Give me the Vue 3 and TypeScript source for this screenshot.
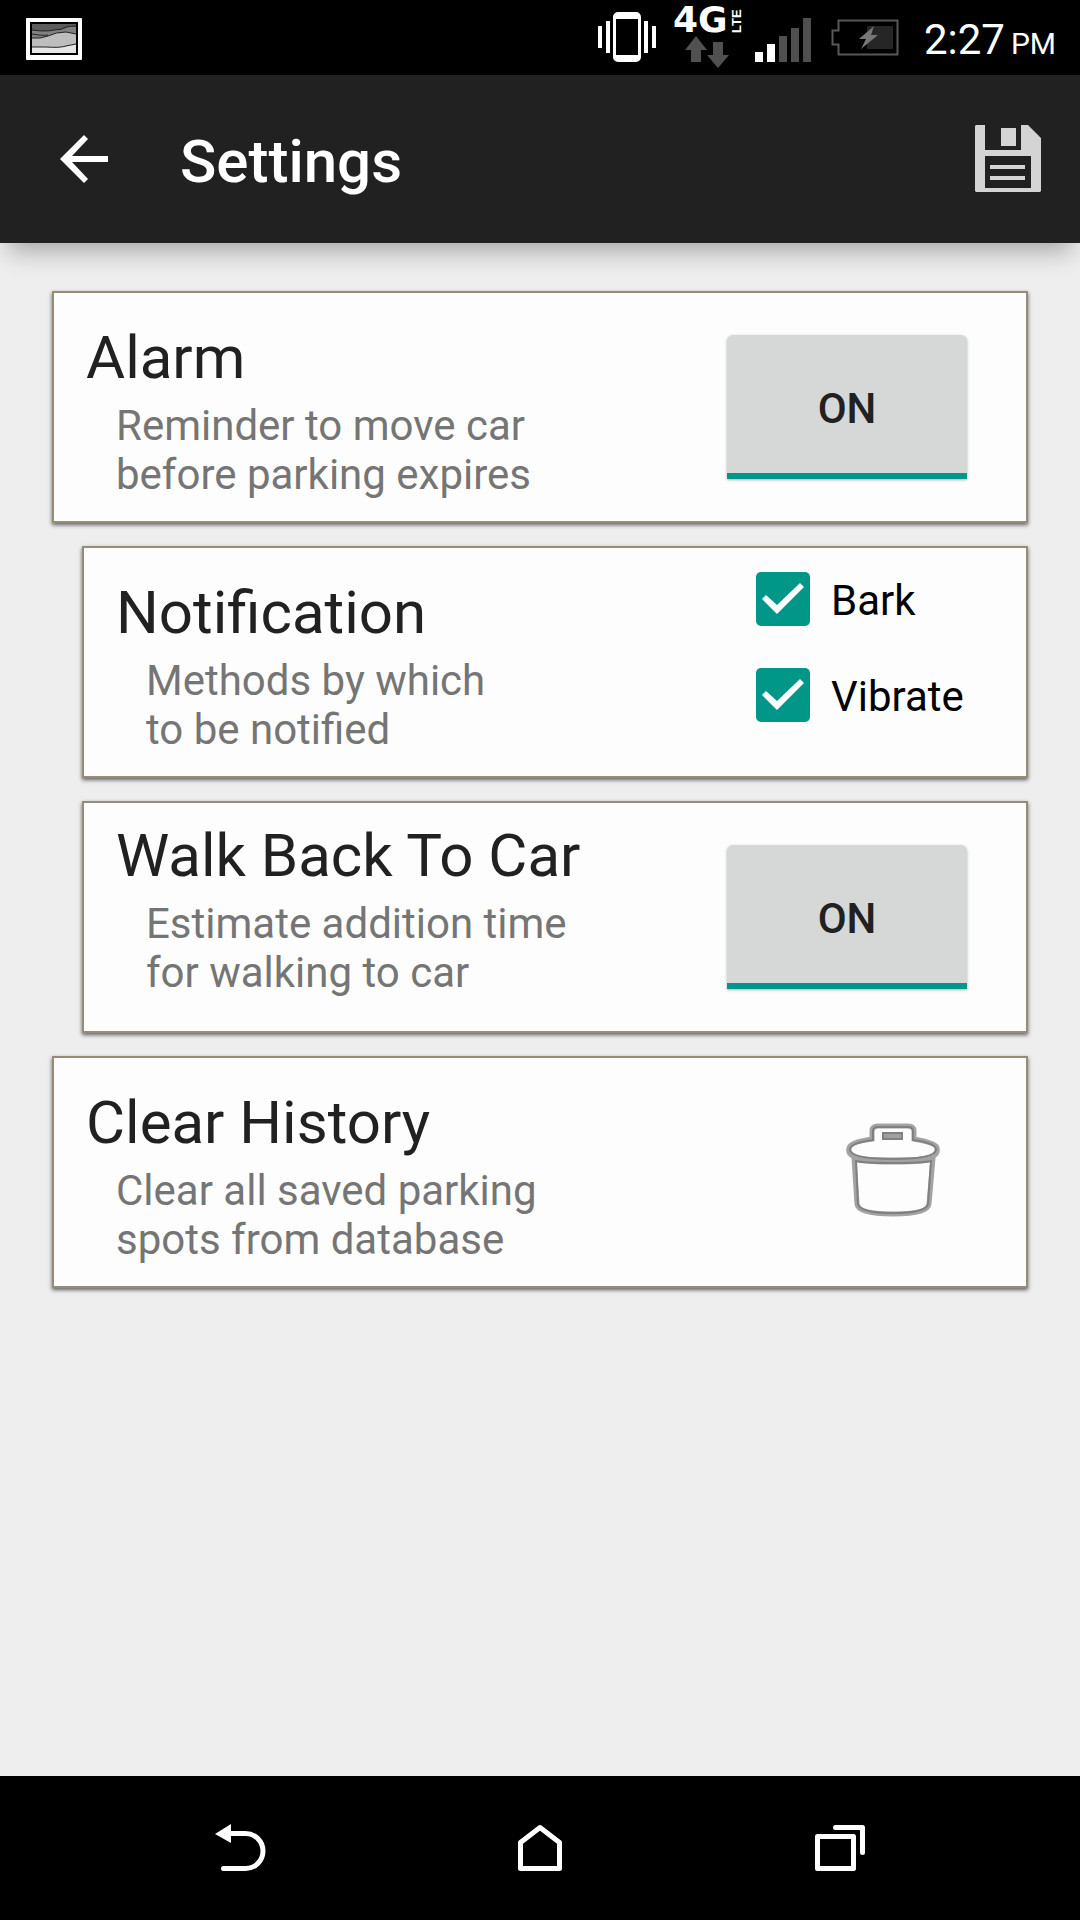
<script setup lang="ts">
import { ref } from 'vue'

const alarm = ref(true)
const walkBack = ref(true)
const methods = ref([
  { id: 'bark', label: 'Bark', on: true },
  { id: 'vibrate', label: 'Vibrate', on: true },
])
</script>

<template>
  <div class="screen">
    <div class="status">
      <svg class="picture" width="56" height="42" viewBox="0 0 56 42" aria-hidden="true">
        <rect width="56" height="42" rx="1" fill="#fff" />
        <rect x="4" y="4" width="48" height="33" fill="#000" />
        <rect x="6" y="6" width="44" height="29" fill="#5c5c5c" />
        <path d="M6 12q14 2 22 0 10 0 14-3l8 0v26H6z" fill="#808080" />
        <path d="M6 20q8 1 16-2 8-4 18-4l10 2v19H6z" fill="#bdbdbd" />
        <path d="M6 29h14q14 1 20-1l10-2v9H6z" fill="#e6e6e6" />
        <path d="M6 12q14 2 22 0 8 0 12-3 6-1 10-1M6 16q12 2 16 1M6 20q8 1 16-2 8-4 18-4l10 2M6 29h14q14 1 20-1l10-2" fill="none" stroke="#222" />
      </svg>
      <svg class="first" width="75" height="75" viewBox="590 0 75 75" role="img" aria-label="Vibrate mode">
        <path d="M598 26h4v22h-4zM606 21h4v32h-4zM644 21h4v32h-4zM652 26h4v22h-4z" fill="#fff" />
        <path fill-rule="evenodd" d="M618 12h18a5 5 0 0 1 5 5v40a5 5 0 0 1-5 5h-18a5 5 0 0 1-5-5V17a5 5 0 0 1 5-5zM616 19v36h22V19z" fill="#fff" />
      </svg>
      <svg width="83" height="75" viewBox="665 0 83 75" role="img" aria-label="4G LTE">
        <text x="673" y="32" class="g4">4G</text>
        <text transform="translate(741 33) rotate(-90)" class="lte">LTE</text>
        <path d="M696 36l11 14h-6v12h-10V50h-6zM718 68l-11-13h6V42h10v13h6z" fill="#505050" />
      </svg>
      <svg width="72" height="75" viewBox="748 0 72 75" role="img" aria-label="Signal">
        <path d="M755 52h8v10h-8zM767 44h8v18h-8z" fill="#fff" />
        <path d="M779 36h8v26h-8zM791 28h8v34h-8zM803 18h8v44h-8z" fill="#4f4f4f" />
      </svg>
      <svg width="90" height="75" viewBox="820 0 90 75" role="img" aria-label="Battery charging">
        <path d="M867 26h26v23h-26z" fill="#262626" />
        <path d="M838.500 20.500h59v34h-59v-10h-6v-14h6z" fill="none" stroke="#585858" stroke-width="2" />
        <path d="M874 26l-15 13h7l-5 10 17-14h-7z" fill="#777" />
      </svg>
      <div class="time"><span>2:27</span><span class="pm">PM</span></div>
    </div>

    <header class="bar">
      <button class="icon-button" type="button" aria-label="Back">
        <svg width="48" height="48" viewBox="0 0 48 48">
          <path d="M48 21H12L28 4l-4-4L0 24l24 24 4-4L12 27h36z" fill="#fff" />
        </svg>
      </button>
      <h1 class="heading">Settings</h1>
      <button class="icon-button" type="button" aria-label="Save">
        <svg width="66" height="68" viewBox="0 0 66 68">
          <path fill-rule="evenodd" d="M1 0h9v25h36V0h7l13 13v53l-1 1H1l-1-1V1zM10 31v32h46V31z" fill="#d4d4d4" />
          <path d="M26 3h15v18H26zM15 40h35v4H15zM15 51h35v4H15z" fill="#d4d4d4" />
        </svg>
      </button>
    </header>

    <main class="list">
      <section class="card">
        <div class="words">
          <h2 class="title">Alarm</h2>
          <p class="detail">Reminder to move car<br />before parking expires</p>
        </div>
        <button class="toggle" type="button" aria-label="Alarm" :aria-pressed="alarm" @click="alarm = !alarm">
          {{ alarm ? 'ON' : 'OFF' }}
        </button>
      </section>

      <section class="card nested">
        <div class="words">
          <h2 class="title">Notification</h2>
          <p class="detail">Methods by which<br />to be notified</p>
        </div>
        <div class="checks">
          <label v-for="m in methods" :key="m.id" class="check" :for="m.id">
            <input :id="m.id" v-model="m.on" class="box" type="checkbox" />
            <span class="check-label">{{ m.label }}</span>
          </label>
        </div>
      </section>

      <section class="card nested">
        <div class="words raised">
          <h2 class="title">Walk Back To Car</h2>
          <p class="detail">Estimate addition time<br />for walking to car</p>
        </div>
        <button class="toggle" type="button" aria-label="Walk Back To Car" :aria-pressed="walkBack" @click="walkBack = !walkBack">
          {{ walkBack ? 'ON' : 'OFF' }}
        </button>
      </section>

      <section class="card">
        <div class="words">
          <h2 class="title">Clear History</h2>
          <p class="detail">Clear all saved parking<br />spots from database</p>
        </div>
        <button class="icon-button trash" type="button" aria-label="Clear history">
          <svg width="94" height="94" viewBox="0 0 94 94" fill="none">
            <g stroke="#a3a3a3" stroke-width="5">
              <path d="M26 16V8q0-5 6-5h30q6 0 6 5v8q23 4 23 9 1 4-1 6-3 6-43 6T4 31q-2-3-1-6 1-6 23-9z" />
              <path d="M8 35l3 46q1 10 36 10t36-10l4-46q-5 4-40 4T8 35z" />
            </g>
            <g stroke="#808080" stroke-width="2">
              <path d="M27 17V8q0-4 5-4h30q5 0 5 4v9q22 3 23 9 0 10-43 10T4 26q1-6 23-9z" />
              <path d="M10 38l2 43q2 9 35 9t35-9l3-43q-8 2-38 2t-37-2z" />
            </g>
            <rect x="37" y="10" width="19" height="6" fill="#a0a0a0" stroke="#808080" stroke-width="2" />
          </svg>
        </button>
      </section>
    </main>

    <nav class="nav">
      <button class="key" type="button" aria-label="Back">
        <svg width="54" height="54" viewBox="213 1821 54 54">
          <path d="M215 1834l16-10v19z" fill="#fff" />
          <path d="M229 1833.500h16.500a17.500 17.500 0 0 1 0 35H223.500" fill="none" stroke="#fff" stroke-width="5" stroke-linecap="round" />
        </svg>
      </button>
      <button class="key" type="button" aria-label="Home">
        <svg width="54" height="54" viewBox="513 1821 54 54">
          <path d="M540 1827.500l19.500 15v26h-39v-26z" fill="none" stroke="#fff" stroke-width="5" stroke-linejoin="round" />
        </svg>
      </button>
      <button class="key" type="button" aria-label="Recent apps">
        <svg width="54" height="54" viewBox="813 1821 54 54">
          <path d="M817.500 1836.500h36v32h-36zM835.500 1827.500h27v25" fill="none" stroke="#fff" stroke-width="5" stroke-linecap="round" stroke-linejoin="round" />
        </svg>
      </button>
    </nav>
  </div>
</template>

<style>
body {
  margin: 0;
  background: #eee;
}
</style>

<style scoped>
.screen {
  display: flex;
  flex-direction: column;
  min-height: 100vh;
  overflow-x: hidden;
  background: #eee;
  font-family: Roboto, 'Liberation Sans', sans-serif;
}
button {
  margin: 0;
  padding: 0;
  border: 0;
  background: none;
  font-family: inherit;
  cursor: pointer;
}
svg {
  display: block;
  flex: none;
}
.status {
  display: flex;
  align-items: center;
  height: 75px;
  padding: 0 24px 0 26px;
  background: #000;
  color: #fff;
}
.picture {
  margin-top: 3px;
}
.first {
  margin-left: auto;
}
.g4 {
  font: bold 36px 'DejaVu Sans', sans-serif;
  fill: #fff;
}
.lte {
  font: bold 13px 'Liberation Sans', sans-serif;
  fill: #fff;
}
.time {
  display: flex;
  align-items: baseline;
  gap: 6px;
  margin: 8px 0 0 14px;
  font-size: 42px;
  line-height: 49px;
  white-space: nowrap;
}
.pm {
  font-size: 30px;
}
.bar {
  display: flex;
  align-items: center;
  height: 168px;
  padding: 0 39px 0 60px;
  background: #212121;
  box-shadow: 0 16px 24px -8px rgba(0, 0, 0, 0.3);
}
.heading {
  flex: 1;
  margin: 0 0 0 72px;
  padding-top: 5px;
  color: #fff;
  font-size: 60px;
  font-weight: 500;
  line-height: 70px;
}
.list {
  display: flex;
  flex: 1;
  flex-direction: column;
  gap: 23px;
  padding: 48px 52px;
}
.card {
  display: flex;
  align-items: center;
  box-sizing: border-box;
  min-height: 232px;
  padding: 0 59px 0 32px;
  border: 2px solid #978c7a;
  background: #fdfdfd;
  box-shadow: 0 2px 4px rgba(0, 0, 0, 0.6);
}
.nested {
  margin-left: 30px;
}
.words {
  flex: 1;
  align-self: flex-start;
  margin-top: 30px;
}
.raised {
  margin-top: 18px;
}
.title {
  margin: 0;
  color: #212121;
  font-size: 60px;
  font-weight: 400;
  line-height: 70px;
}
.detail {
  margin: 8px 0 0 30px;
  color: #757575;
  font-size: 42px;
  line-height: 49px;
}
.toggle {
  width: 240px;
  height: 144px;
  padding-top: 8px;
  border-bottom: 6px solid #009688;
  border-radius: 6px 6px 0 0;
  background: #d6d7d7;
  box-shadow: 0 1px 3px rgba(0, 0, 0, 0.3);
  color: #212121;
  font-size: 42px;
  font-weight: 500;
}
.checks {
  align-self: flex-start;
  width: 211px;
  margin-top: 3px;
}
.check {
  display: flex;
  align-items: center;
  gap: 21px;
  height: 96px;
  color: #000;
  font-size: 42px;
}
.check-label {
  padding-top: 2px;
}
.box {
  flex: none;
  width: 54px;
  height: 54px;
  margin: 0;
  border-radius: 5px;
  background: #009688;
  appearance: none;
}
.box:not(:checked) {
  background: #757575;
}
.box:checked::before {
  content: '';
  display: block;
  width: 54px;
  height: 54px;
  background: #fdfdfd;
  clip-path: polygon(6px 27px, 10px 23px, 21px 33px, 44px 11px, 48px 15px, 21px 42px);
}
.trash {
  margin: 0 27px 4px 0;
}
.nav {
  display: flex;
  justify-content: center;
  height: 144px;
  background: #000;
}
.key {
  display: flex;
  flex: 0 1 300px;
  align-items: center;
  justify-content: center;
}
</style>
